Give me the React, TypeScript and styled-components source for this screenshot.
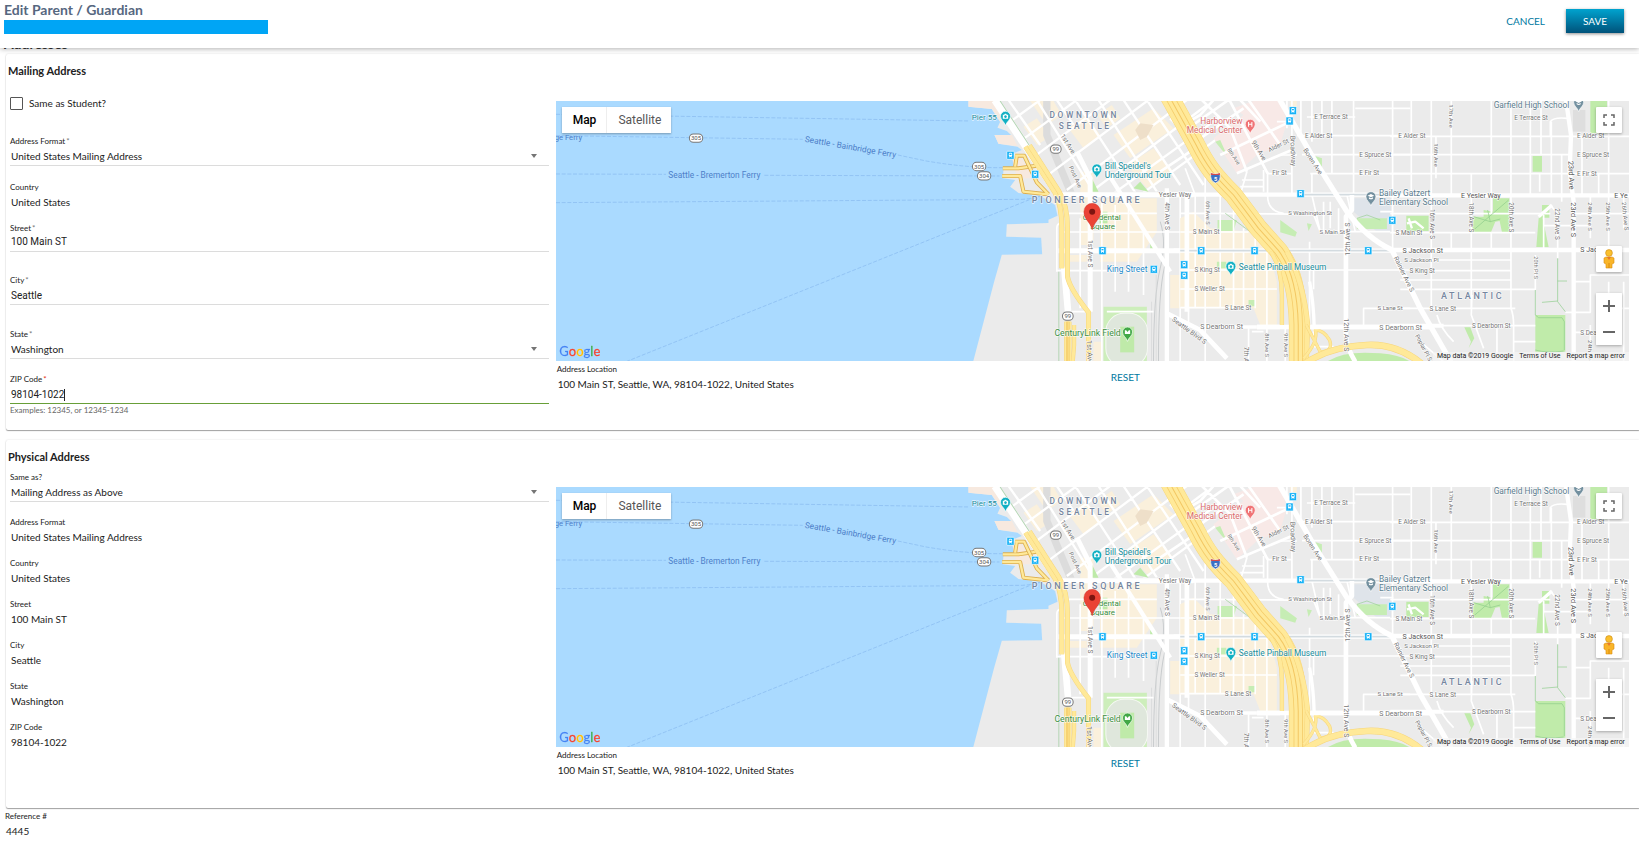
import React, { useId, useState } from 'react';
import styled, { createGlobalStyle } from 'styled-components';

const GlobalStyle = createGlobalStyle`
  * { box-sizing: border-box; }
  body {
    margin: 0;
    background: #fff;
    color: #212121;
    font-family: Lato, "Liberation Sans", sans-serif;
    font-size: 11px;
  }
`;

/* ---------- page shell ---------- */

const Header = styled.header`
  position: sticky;
  top: 0;
  z-index: 5;
  display: flex;
  justify-content: space-between;
  height: 48px;
  padding: 0 15px 0 4px;
  background: #fff;
  box-shadow: 0 1px 5px rgba(0, 0, 0, 0.3);
`;

const Title = styled.h1`
  margin: 0;
  font-size: 14px;
  line-height: 20px;
  font-weight: 700;
  color: #56677f;
`;

const NameBar = styled.div`
  width: 264px;
  height: 14px;
  background: #00a5f5;
`;

const Actions = styled.div`
  display: flex;
  gap: 10px;
  padding-top: 9px;
`;

const TextButton = styled.button`
  height: 24px;
  padding: 0 11px;
  border: 0;
  background: none;
  font: 400 10px/24px Lato, "Liberation Sans", sans-serif;
  color: #0079a1;
  cursor: pointer;
`;

const SaveButton = styled(TextButton)`
  width: 58px;
  color: #fff;
  background: linear-gradient(#00a3cf, #00527a);
  box-shadow: 0 1px 3px rgba(0, 0, 0, 0.45);
`;

const SectionTitle = styled.h2`
  margin: -14px 0 0 4px;
  font-size: 14px;
  line-height: 20px;
  font-weight: 700;
  color: #333;
`;

const Card = styled.section`
  margin: 0 0 10px 6px;
  padding: 9px 10px 0 4px;
  border-radius: 2px 0 0 2px;
  box-shadow: 0 1px 1px rgba(0, 0, 0, 0.35), 0 0 2px rgba(0, 0, 0, 0.14);
`;

const CardTitle = styled.h3`
  margin: 0 0 0 -2px;
  font-size: 11px;
  line-height: 16px;
  font-weight: 700;
`;

const Columns = styled.div`
  display: grid;
  grid-template-columns: 1fr 2fr;
`;

const FieldsColumn = styled.div<{ $top?: number; $bottom: number }>`
  padding: ${(p) => p.$top ?? 0}px 1px ${(p) => p.$bottom}px 0;
`;

const MapColumn = styled.div`
  padding: 22px 0 0 6px;
`;

const MapFooter = styled.div`
  display: grid;
  grid-template-columns: 1fr 1fr;
  padding: 2px 0 0 1px;
`;

const ResetCell = styled.div`
  padding: 2px 0 0 7px;
`;

/* ---------- fields ---------- */

const FieldBox = styled.div<{ $gap: number }>`
  margin-bottom: ${(p) => p.$gap}px;
`;

const Label = styled.label`
  display: block;
  font-size: 8px;
  line-height: 12px;
`;

const Star = styled.span<{ $alert?: boolean }>`
  margin-left: 1px;
  color: ${(p) => (p.$alert ? '#e53012' : '#777')};
`;

const Control = styled.div<{ $tight?: boolean; $line: string }>`
  position: relative;
  display: flex;
  align-items: center;
  box-sizing: content-box;
  height: 15px;
  padding: ${(p) => (p.$tight ? '0 0 2px 1px' : '2px 0 1px 1px')};
  border-bottom: 1px solid ${(p) => p.$line};
`;

const Output = styled.output`
  display: block;
  padding: 2px 0 0 1px;
  font-size: 10px;
  line-height: 15px;
`;

const Select = styled.select`
  appearance: none;
  width: 100%;
  height: 15px;
  padding: 0;
  border: 0;
  background: none;
  color: inherit;
  font: 400 10px/15px Lato, "Liberation Sans", sans-serif;
`;

const Arrow = styled.svg`
  position: absolute;
  right: 12px;
  top: 7px;
  pointer-events: none;
`;

const Input = styled.input<{ $fit?: boolean }>`
  width: 100%;
  height: 15px;
  padding: 0;
  border: 0;
  outline: 0;
  background: none;
  color: inherit;
  font: 400 10px/15px Roboto, "Liberation Sans", sans-serif;
  ${(p) => p.$fit && 'width: auto; field-sizing: content;'}
`;

const Caret = styled.span`
  width: 1px;
  height: 12px;
  background: #222;
`;

const Hint = styled.div`
  font-size: 8px;
  line-height: 12px;
  color: #666;
`;

const CheckRow = styled.label`
  display: flex;
  align-items: center;
  gap: 6px;
  margin: 17px 0 24px;
  font-size: 10px;
  line-height: 15px;
`;

const CheckBox = styled.input`
  appearance: none;
  width: 13px;
  height: 13px;
  margin: 0;
  border: 1px solid #555;
  border-radius: 1px;
  &:checked { background: #0079a1; }
`;

const Reference = styled.div`
  padding: 0 0 10px 5px;
  margin-top: -8px;
`;

function ReadOnly({ label, value, gap = 12 }: { label: string; value: string; gap?: number }) {
  const id = useId();
  return (
    <FieldBox $gap={gap}>
      <Label htmlFor={id}>{label}</Label>
      <Output id={id}>{value}</Output>
    </FieldBox>
  );
}

function SelectField({ label, value, required, gap }: { label: string; value: string; required?: boolean; gap: number }) {
  const id = useId();
  return (
    <FieldBox $gap={gap}>
      <Label htmlFor={id}>{label}{required && <Star>*</Star>}</Label>
      <Control $line="#dcdcdc">
        <Select id={id} defaultValue={value}><option>{value}</option></Select>
        <Arrow width="6" height="4" viewBox="0 0 6 4"><path d="M0 0h6L3 4z" fill="#757575" /></Arrow>
      </Control>
    </FieldBox>
  );
}

function TextField({ label, initial, tight, active, gap }: { label: string; initial: string; tight?: boolean; active?: boolean; gap: number }) {
  const id = useId();
  const [value, setValue] = useState(initial);
  return (
    <FieldBox $gap={gap}>
      <Label htmlFor={id}>{label}<Star $alert={active}>*</Star></Label>
      <Control $tight={tight} $line={active ? '#689f38' : '#dcdcdc'}>
        <Input id={id} $fit={active} value={value} onChange={(e) => setValue(e.target.value)} />
        {active && <Caret />}
      </Control>
    </FieldBox>
  );
}

/* ---------- map ---------- */

const MapFrame = styled.div`
  position: relative;
  height: 260px;
  overflow: hidden;
  background: #aadaff;
  font-family: Roboto, "Liberation Sans", sans-serif;
`;

const MapDrawing = styled.svg`
  display: block;
  width: 100%;
  height: 100%;
`;

const TypeSwitch = styled.div`
  position: absolute;
  left: 6px;
  top: 6px;
  display: flex;
  box-shadow: 0 1px 2px rgba(0, 0, 0, 0.3);
`;

const TypeButton = styled.button<{ $on?: boolean }>`
  height: 26px;
  padding: 0 10px 0 11px;
  border: 0;
  border-right: ${(p) => (p.$on ? '1px solid #eee' : '0')};
  background: #fff;
  color: ${(p) => (p.$on ? '#000' : '#565656')};
  font: ${(p) => (p.$on ? 500 : 400)} 12px/26px Roboto, "Liberation Sans", sans-serif;
`;

const SideControls = styled.div`
  position: absolute;
  right: 7px;
  top: 6px;
  bottom: 16px;
  width: 26px;
  display: flex;
  flex-direction: column;
`;

const MapButton = styled.button`
  display: grid;
  place-items: center;
  width: 26px;
  height: 26px;
  padding: 0;
  border: 0;
  border-radius: 1px;
  background: #fff;
  box-shadow: 0 1px 3px rgba(0, 0, 0, 0.3);
`;

const PegmanButton = styled(MapButton)`
  margin: auto 0 21px;
`;

const ZoomGroup = styled.div`
  background: #fff;
  border-radius: 1px;
  box-shadow: 0 1px 3px rgba(0, 0, 0, 0.3);
  & > button { box-shadow: none; }
`;

const Credits = styled.div`
  position: absolute;
  right: 0;
  bottom: 0;
  display: flex;
  gap: 6px;
  padding: 0 4px;
  background: rgba(245, 245, 245, 0.7);
  font-size: 7px;
  line-height: 9px;
  color: #222;
  & > a { color: inherit; text-decoration: none; }
`;

const Street = styled.path<{ $w?: number; $c?: string }>`
  fill: none;
  stroke: ${(p) => p.$c ?? '#fff'};
  stroke-width: ${(p) => p.$w ?? 5};
  stroke-linejoin: round;
`;

const Name = styled.text<{ $c?: string; $s?: number; $b?: number }>`
  font-family: Roboto, "Liberation Sans", sans-serif;
  font-size: ${(p) => p.$s ?? 20}px;
  font-weight: ${(p) => p.$b ?? 400};
  fill: ${(p) => p.$c ?? '#757575'};
  stroke: #fff;
  stroke-opacity: 0.75;
  stroke-width: 4px;
  stroke-linejoin: round;
  paint-order: stroke;
`;

const SeaName = styled(Name)`
  stroke: none;
`;

const District = styled(Name)`
  letter-spacing: 8px;
`;

const Logo = styled.text`
  font: 400 39px Lato, "Liberation Sans", sans-serif;
  stroke-width: 1px;
  filter: drop-shadow(0 0 2px #fff);
`;

function Freeway({ d, w }: { d: string; w: number }) {
  return (
    <>
      <Street d={d} $w={w} $c="#f7d67c" />
      <Street d={d} $w={w - 3} $c="#ffe999" />
      {w > 20 && <Street d={d} $w={w * 0.5} $c="#f5cd6c" />}
      {w > 20 && <Street d={d} $w={w * 0.5 - 5} $c="#ffe999" />}
      {w > 20 && <Street d={d} $w={3} $c="#f3c763" />}
    </>
  );
}

function Ramp({ d }: { d: string }) {
  return (
    <>
      <Street d={d} $w={12} $c="#dcae4e" />
      <Street d={d} $w={7} $c="#ffe999" />
    </>
  );
}

function Stop({ x, y }: { x: number; y: number }) {
  return (
    <g transform={`translate(${x - 11} ${y - 12})`}>
      <rect width="22" height="24" rx="2" fill="#16b2f7" stroke="#fff" strokeWidth="2" />
      <rect x="6" y="4" width="10" height="12" rx="3" fill="#fff" />
      <rect x="8" y="7" width="6" height="4" fill="#16b2f7" />
      <path d="M7 19l2-3M15 19l-2-3" stroke="#fff" strokeWidth="2" />
    </g>
  );
}

function Shield({ x, y, n }: { x: number; y: number; n: string }) {
  const w = n.length > 2 ? 40 : 32;
  return (
    <g>
      <rect x={x - w / 2} y={y - 13} width={w} height="25" rx="12" fill="#fff" stroke="#777" strokeWidth="3" />
      <text x={x} y={y + 6} textAnchor="middle" fontFamily="Roboto, sans-serif" fontSize="18" fill="#555">{n}</text>
    </g>
  );
}

function Poi({ x, y, color, kind }: { x: number; y: number; color: string; kind: 'camera' | 'hospital' | 'school' | 'field' }) {
  return (
    <g transform={`translate(${x} ${y})`}>
      <path d="M0 28C-3 16-15 12-15 0a15 15 0 0 1 30 0C15 12 3 16 0 28z" fill={color} stroke="#fff" strokeWidth="2" />
      {kind === 'camera' && <path d="M-8-5h4l2-3h4l2 3h4V7H-8zM0-3a4 4 0 1 0 .1 0z" fill="#fff" fillRule="evenodd" />}
      {kind === 'hospital' && <path d="M-5-7v14M5-7v14M-5 0H5" stroke="#fff" strokeWidth="3" fill="none" />}
      {kind === 'school' && <path d="M-10-3L0-8 10-3 0 2zM-6 2v4q6 4 12 0V2L0 5z" fill="#fff" />}
      {kind === 'field' && <path d="M-8-5h4l4 5 4-5h4V6H-8z" fill="#fff" />}
    </g>
  );
}

const minorA =
  'M380 355H650M370 411H720M350 527H620M395 650H440M485 300V600M525 330V590M565 330V590M610 400V600M720 300V800M745 500V700M350 530V470V400Q350 385 362 385M420 370V640M485 540V800M500 650H640';
const downtownGrid =
  'M190 95L300 15M225 150L410 15M262 200L510 15M310 250L625 15M380 285L740 15M440 300L800 30M500 310L840 65M600 300L860 110M205 15L300 150M290 15L460 290M350 15L400 90M405 15L590 300M475 15L650 290M550 15L720 270M620 15L790 270';
const minorB =
  'M0 355H80L400 358L420 410H630M0 411H205M0 525H690M0 582H290M0 638H210M75 230V800M45 300V640M120 300V640M160 300V640M190 400V640M225 430V640M260 465V800M400 583V525M388 440V690M395 15V140M425 15V120M455 15V236M520 15V300M637 15V465M525 40H690M380 66H525M350 122H690M365 179H690M390 236H690M335 15V295M262 230V300Q262 350 310 355M262 236H335M200 230L180 300M185 255H250M180 275H250M250 225V290M395 236V300L420 410M350 180H300M430 320V410M450 320V400M475 340V410M550 690V640H690M15 220L45 300M315 690V800M205 700V800M215 710H250M400 690V755H460M600 350H640M500 300L525 410M320 15V100M362 15V120M290 80H330';
const minorC =
  'M-30 124H687M-30 179H505M-30 236H687M-30 356H450M520 356H687M-30 413H405M90 495H330M90 527H330M0 555H330M0 583H405V480M0 640H345M0 692H405M33 15V300M93 15V650M153 15V301M213 236V640M107 124V250M273 15V356M332 15V640Q340 660 340 692V800M390 15V300M422 15V180M453 80V300M273 413V465M430 360V465M450 330L472 356V490M418 236V290M484 180V320M570 300V430M625 15V465M670 300V400M545 124V301M595 236V301M520 560H570V540H687M520 712H600M495 652H570V560M625 560V640H687M570 690V800M670 560V800M215 600L213 660L250 760M290 700V790M110 660Q120 700 160 740M340 740H405M430 392H570M450 124V80Q460 66 500 70M153 465V413M60 640L40 600M60 740L130 800';

function MapArt() {
  const id = useId().replace(/[^a-zA-Z0-9]/g, '');
  return (
    <MapDrawing viewBox="0 18 3219 780" preserveAspectRatio="xMidYMid slice" role="img" aria-label="Map of downtown Seattle">
      <defs>
        <clipPath id={`${id}d`}><path d="M165 15L350 290H720L860 290V15z" /></clipPath>
      </defs>

      {/* ferry lines */}
      <g fill="none" stroke="#86b8ee" strokeWidth="2" strokeDasharray="12 5">
        <path d="M0 58L1240 78M0 122L740 133M1025 180L1110 198Q1240 220 1345 218M0 237L330 238M625 241L1330 243M0 323L1400 313Q1440 310 1460 300M210 800L1180 410L1430 310" />
      </g>

      {/* waterfront and downtown */}
      <g transform="translate(1152 0)">
        <path d="M85 0V35L155 42L180 80L172 98L200 108L215 122L163 120L175 146L232 155L245 165L220 175V215L190 222L188 250L225 255L210 275L235 294L300 302L345 330L352 362L325 374V384L200 388L198 425L303 428L306 478L185 479L162 560L99 800H2100V0z" fill="#ebebeb" />
        <path d="M85 18V35L155 42L180 80L200 80L160 18zM163 120H215L232 153L175 146zM215 185H240L285 250L230 250z" fill="#f7e9df" />
        <path d="M270 18L320 90L365 60L340 18zM250 95L290 150L330 125L290 70zM385 100L430 160L480 120L440 60zM520 120L570 190L700 100L640 40zM420 230H460V450H420zM480 310H650V410L590 500H480zM690 540H745V640H690zM460 740H485V800H460zM380 480H440V500H380zM560 210L620 280L700 230L640 160zM470 60L500 100L540 70L515 30z" fill="#faf0dc" />
        <g clipPath={`url(#${id}d)`}>
          <Street d="M320 15V120L395 300" $w={22} $c="#dcdcdc" />
          <Street d={downtownGrid} $w={7} />
        </g>
        <path d="M455 250L475 290H455zM580 280L600 260L625 290zM630 440L645 462H630zM478 350H502V385H478z" fill="#bdeaa8" />
        <path d="M490 635H620V800H490z" fill="#cdeebb" />
        <rect x="497" y="655" width="125" height="160" rx="55" fill="#dfe7dc" stroke="#f5f8f3" strokeWidth="3" />
        <rect x="540" y="695" width="42" height="77" fill="#bfeaa9" />
        <Street d="M660 380Q680 440 660 520T640 800M672 380Q690 440 672 520T655 800" $w={3} $c="#c9ccce" />
        <Street d="M648 540V800M634 620V800" $w={2} $c="#d4d6d8" />
        <Street d={minorA} />
        <Street d="M165 15L350 292" $w={24} />
        <Street d="M178 15L360 292M356 530V800" $w={3} $c="#b4d5b4" />
        <Street d="M410 170L450 250V650M355 467H720M350 299H760" $w={15} />
        <Street d="M500 230L690 530M680 280V800" $w={13} />
        <Street d="M372 515L385 665" $w={20} />
        <Ramp d="M188 220H235L290 212" />
        <Ramp d="M186 243H240L250 290L322 298M225 182H252L290 262L325 298M230 182L225 215" />
        <Freeway d="M256 155L344 292Q365 330 365 400V520" w={15} />
        <Freeway d="M268 151L356 288Q382 330 382 400V545Q388 580 445 652V800" w={15} />
        <Freeway d="M383 680V800" w={22} />
        <Freeway d="M402 690V750L398 800" w={12} />
        <path d="M585 105L600 85L640 90L620 125L600 135z" fill="#eedfc9" />
      </g>

      {/* First Hill and the interstate */}
      <g transform="translate(1872 0)">
        <path d="M100 130L190 60L160 40L220 18H300L320 80L300 150L230 180L170 235z" fill="#f8e9e7" />
        <path d="M0 370L40 350L90 400L205 410L265 465L290 560V690H240L220 640H0zM330 18H350V50H330z" fill="#faf0dc" />
        <path d="M520 310H632V410H590L520 350z" fill="#dfe4ea" />
        <path d="M105 140L120 135L140 180L125 165zM112 375H170L160 408H112zM300 375L350 412L345 425L300 412zM380 385L395 388L385 408zM110 500H138V520H110zM205 615H225V634H205zM395 180L425 190V225zM530 370H620V402H530z" fill="#c6edb4" />
        <path d="M440 800Q490 765 600 775Q660 780 690 800z" fill="#c0ebaa" />
        <Street d={minorB} />
        <g fill="none" stroke="#fff" strokeWidth="8">
          <path d="M-60 230L60 150M-30 70L30 130L75 230M10 110L180 -10M60 130L190 40M120 180L330 80M170 235L335 165M60 10L150 100L200 230M145 10L262 235M205 15L300 150M0 95L60 60L100 15M180 15L240 80" />
        </g>
        <Street d="M-30 299H640M-20 467H640" $w={13} />
        <Street d="M350 299H640M0 467H635" $w={5} $c="#d3dbe0" />
        <Street d="M290 0L345 95L400 190L500 350Q560 430 635 465L720 640L812 800" $w={16} />
        <Street d="M515 300V345L497 365V720Q500 760 525 800M20 290V650M230 696H760M-40 655L60 705L140 790" $w={14} />
        <Street d="M388 560Q400 620 402 700M60 696H230" $w={10} />
        <Street d="M135 355L210 410M530 370L560 360L600 375" $w={2} $c="#97cf92" />
        <Freeway d="M-35 0L45 145C80 215 105 245 160 300L235 400L295 467C335 520 352 590 354 690V800" w={56} />
        <Freeway d="M272 470Q305 520 305 600V690" w={13} />
        <Freeway d="M320 470Q370 560 382 690L378 800" w={16} />
        <Freeway d="M378 690L420 770Q460 770 448 735Q430 705 405 705Q415 740 370 790" w={10} />
        <Freeway d="M360 815Q440 755 560 750Q660 745 740 820" w={20} />
        <Street d="M230 696H300M390 696H760" $w={14} />
      </g>

      {/* Central District and Atlantic */}
      <g transform="translate(2532 0)">
        <path d="M570 18H620V115H570zM397 183H425V230H397zM278 310H327V412H305L298 378L285 380L272 412H216L220 365H250V345L278 350zM18 362H85V408H18zM425 330H447V368H425zM415 370L425 360L445 456H408zM405 660H495V770H405zM192 697H210L222 730L205 760L212 740z" fill="#c0ebaa" />
        <path d="M518 45H555V110H518z" fill="#dedede" />
        <Street d={minorC} />
        <Street d="M-30 301H687M-30 465H687" $w={13} />
        <Street d="M497 15L512 120L508 230L520 320V800" $w={13} />
        <Street d="M-30 692H130" $w={12} />
        <Street d="M25 370L35 400M20 385L45 380L70 400" $w={7} />
        <Street d="M220 405L325 315M220 365L270 380L262 345M270 380L300 372M472 490V620L495 650M425 622L472 618M472 558H500M405 585V660L415 668H485L492 680V765M405 765Q440 775 490 768" $w={2} $c="#8ccb8a" />
        <Street d="M415 365L455 330" $w={10} />
      </g>

      {/* labels over the water */}
      <SeaName x="-4" y="134" $c="#4d7fc9" $s={23}>ge Ferry</SeaName>
      <SeaName x="337" y="248" $c="#4d7fc9" $s={25}>Seattle - Bremerton Ferry</SeaName>
      <SeaName transform="translate(745 140) rotate(10)" $c="#4d7fc9" $s={25}>Seattle - Bainbridge Ferry</SeaName>
      <Shield x={420} y={130} n="305" />

      <g transform="translate(1152 0)">
        <Shield x={117} y={215} n="305" />
        <Shield x={132} y={243} n="304" />
        <Shield x={347} y={163} n="99" />
        <Shield x={383} y={664} n="99" />
        <Stop x={211} y={181} />
        <Stop x={285} y={238} />
        <Stop x={487} y={467} />
        <Stop x={641} y={523} />
        <Stop x={732} y={509} />
        <Stop x={732} y={541} />
        <Name x="95" y="76" $c="#168c9c" $s={24}>Pier 55</Name>
        <Poi x={196} y={64} color="#12b0c3" kind="camera" />
        <District x="328" y="70" $c="#75869f" $s={25} $b={500}>DOWNTOWN</District>
        <District x="356" y="101" $c="#75869f" $s={25} $b={500}>SEATTLE</District>
        <Poi x={470} y={222} color="#12b0c3" kind="camera" />
        <Name x="494" y="223" $c="#168c9c" $s={25}>Bill Speidel's</Name>
        <Name x="494" y="248" $c="#168c9c" $s={25}>Underground Tour</Name>
        <Name transform="translate(360 122) rotate(58)">1st Ave</Name>
        <Name transform="translate(386 216) rotate(66)" $s={18}>Post Ave</Name>
        <Name x="656" y="306">Yesler Way</Name>
        <Name transform="translate(675 322) rotate(90)">4th Ave S</Name>
        <Name transform="translate(442 435) rotate(90)">1st Ave S</Name>
        <Name transform="translate(440 735) rotate(88)" $s={22}>1st Ave S</Name>
        <Name transform="translate(694 676) rotate(36)">Seattle Blvd S</Name>
        <District x="275" y="323" $c="#75869f" $s={27} $b={500}>PIONEER SQUARE</District>
        <Name x="428" y="376" $c="#3b8e41" $s={24}>Occidental</Name>
        <Name x="450" y="401" $c="#3b8e41" $s={24}>Square</Name>
        <Name x="500" y="532" $c="#1a87c9" $s={25}>King Street</Name>
        <Name x="343" y="724" $c="#3b8e41" $s={26}>CenturyLink Field</Name>
        <Poi x={562} y={711} color="#42a846" kind="field" />
      </g>

      <g transform="translate(1872 0)">
        <Stop x={338} y={47} />
        <Stop x={328} y={78} />
        <Stop x={361} y={296} />
        <Stop x={63} y={467} />
        <Stop x={223} y={467} />
        <Stop x={564} y={467} />
        <Stop x={636} y={376} />
        <Name x="187" y="88" textAnchor="end" $c="#d9696b" $s={25}>Harborview</Name>
        <Name x="187" y="113" textAnchor="end" $c="#d9696b" $s={25}>Medical Center</Name>
        <Poi x={210} y={88} color="#f07375" kind="hospital" />
        <path d="M92 234Q106 240 119 234Q124 258 106 264Q88 258 92 234z" fill="#3b70c4" stroke="#fff" strokeWidth="2" />
        <path d="M92 234Q106 240 119 234V240H92z" fill="#d84b4b" />
        <text x="106" y="257" textAnchor="middle" fontFamily="Roboto, sans-serif" fontSize="17" fontWeight="700" fill="#fff">5</text>
        <Name x="402" y="71" $s={19}>E Terrace St</Name>
        <Name x="374" y="128" $s={19}>E Alder St</Name>
        <Name x="654" y="128" $s={19}>E Alder St</Name>
        <Name x="537" y="185" $s={19}>E Spruce St</Name>
        <Name x="537" y="240" $s={19}>E Fir St</Name>
        <Name x="276" y="239" $s={19}>Fir St</Name>
        <Name x="324" y="361" $s={18}>S Washington St</Name>
        <Name x="418" y="417" $s={18}>S Main St</Name>
        <Name x="38" y="417" $s={19}>S Main St</Name>
        <Name x="43" y="532" $s={19}>S King St</Name>
        <Name x="43" y="588" $s={19}>S Weller St</Name>
        <Name x="134" y="645" $s={19}>S Lane St</Name>
        <Name x="592" y="645" $s={18}>S Lane St</Name>
        <Name x="60" y="703" $s={21}>S Dearborn St</Name>
        <Name x="597" y="704" $s={21}>S Dearborn St</Name>
        <Name transform="translate(213 142) rotate(58)">9th Ave</Name>
        <Name transform="translate(140 164) rotate(56)" $s={17}>8th Ave</Name>
        <Name transform="translate(268 172) rotate(-27)" $s={19}>Alder St</Name>
        <Name transform="translate(330 122) rotate(88)" $s={21}>Broadway</Name>
        <Name transform="translate(368 165) rotate(57)">Boren Ave</Name>
        <Name transform="translate(76 318) rotate(90)" $s={17}>6th Ave S</Name>
        <Name transform="translate(510 482) rotate(-90)" $s={21}>12th Ave S</Name>
        <Name transform="translate(490 670) rotate(90)" $s={21}>12th Ave S</Name>
        <Name transform="translate(640 488) rotate(64)">Rainier Ave S</Name>
        <Name transform="translate(255 715) rotate(90)" $s={17}>8th Ave S</Name>
        <Name transform="translate(310 715) rotate(90)" $s={17}>9th Ave S</Name>
        <Name transform="translate(192 755) rotate(90)">7th Ave S</Name>
        <Poi x={152} y={514} color="#12b0c3" kind="camera" />
        <Name x="176" y="526" $c="#168c9c" $s={25}>Seattle Pinball Museum</Name>
        <Poi x={572} y={305} color="#73909f" kind="school" />
        <Name x="596" y="304" $c="#5b7c8e" $s={25}>Bailey Gatzert</Name>
        <Name x="596" y="329" $c="#5b7c8e" $s={25}>Elementary School</Name>
      </g>

      <g transform="translate(2532 0)">
        <Name x="280" y="38" $c="#5b7c8e" $s={25}>Garfield High School</Name>
        <Poi x={535} y={22} color="#73909f" kind="school" />
        <Name x="342" y="74" $s={19}>E Terrace St</Name>
        <Name x="530" y="130" $s={19}>E Alder St</Name>
        <Name x="530" y="185" $s={19}>E Spruce St</Name>
        <Name x="530" y="242" $s={19}>E Fir St</Name>
        <Name x="182" y="308" $s={21} $c="#555">E Yesler Way</Name>
        <Name x="642" y="310" $s={21} $c="#555">E Ye</Name>
        <Name x="7" y="473" $s={21} $c="#555">S Jackson St</Name>
        <Name x="540" y="471" $s={21} $c="#555">S Jackson</Name>
        <Name x="12" y="501" $s={18}>S Jackson Pl</Name>
        <Name x="28" y="533" $s={19}>S King St</Name>
        <Name x="-14" y="419" $s={19}>S Main St</Name>
        <Name x="88" y="647" $s={19}>S Lane St</Name>
        <Name x="215" y="698" $s={19}>S Dearborn St</Name>
        <Name x="540" y="719" $s={19}>S Dearborn</Name>
        <Name transform="translate(146 28) rotate(90)" $s={18}>17th Ave</Name>
        <Name transform="translate(101 145) rotate(90)" $s={18}>16th Ave</Name>
        <Name transform="translate(88 342) rotate(90)" $s={19}>16th Ave S</Name>
        <Name transform="translate(205 322) rotate(90)" $s={19}>18th Ave S</Name>
        <Name transform="translate(325 322) rotate(90)" $s={19}>20th Ave S</Name>
        <Name transform="translate(465 340) rotate(90)" $s={19}>22nd Ave S</Name>
        <Name transform="translate(512 322) rotate(90)" $s={22} $c="#555">23rd Ave S</Name>
        <Name transform="translate(504 198) rotate(88)" $s={22} $c="#555">23rd Ave</Name>
        <Name transform="translate(564 322) rotate(90)" $s={18}>24th Ave S</Name>
        <Name transform="translate(616 322) rotate(90)" $s={18}>25th Ave S</Name>
        <Name transform="translate(664 322) rotate(84)" $s={18}>26th Ave S</Name>
        <Name transform="translate(400 484) rotate(90)" $s={17}>20th Pl S</Name>
        <Name transform="translate(562 735) rotate(90)" $s={18}>24th Ave S</Name>
        <Name transform="translate(44 722) rotate(62)" $s={18}>Poplar Pl S</Name>
        <District x="122" y="612" $c="#75869f" $s={27} $b={500}>ATLANTIC</District>
      </g>

      {/* marker for the address */}
      <g transform="translate(1608 350)">
        <path d="M0 55C-4 32-25 24-25 0a25 25 0 0 1 50 0C25 24 4 32 0 55z" fill="#ea4335" stroke="#c5352a" strokeWidth="1" />
        <circle r="9" fill="#7d1510" />
      </g>

      <Logo x="10" y="783">
        <tspan fill="#4285f4" stroke="#4285f4">G</tspan><tspan fill="#ea4335" stroke="#ea4335">o</tspan><tspan fill="#fbbc05" stroke="#fbbc05">o</tspan><tspan fill="#4285f4" stroke="#4285f4">g</tspan><tspan fill="#34a853" stroke="#34a853">l</tspan><tspan fill="#ea4335" stroke="#ea4335">e</tspan>
      </Logo>
    </MapDrawing>
  );
}

function MapPanel() {
  return (
    <MapFrame>
      <MapArt />
      <TypeSwitch>
        <TypeButton $on>Map</TypeButton>
        <TypeButton>Satellite</TypeButton>
      </TypeSwitch>
      <SideControls>
        <MapButton aria-label="Toggle fullscreen">
          <svg width="12" height="12" viewBox="0 0 12 12" fill="none" stroke="#666" strokeWidth="1.5"><path d="M1 4V1h3M8 1h3v3M11 8v3H8M4 11H1V8" /></svg>
        </MapButton>
        <PegmanButton aria-label="Street View">
          <svg width="12" height="20" viewBox="0 0 12 20">
            <path d="M3 8h6l2 1v5l-2 1v4H3v-4l-2-1V9z" fill="#f9b529" stroke="#d98b0e" strokeWidth="0.6" />
            <circle cx="6" cy="4" r="3.4" fill="#fbc02d" stroke="#c98a17" strokeWidth="0.6" />
            <path d="M4 8l2 3 2-3z" fill="#e8792b" />
            <path d="M6 14v5" stroke="#d98b0e" />
          </svg>
        </PegmanButton>
        <ZoomGroup>
          <MapButton aria-label="Zoom in">
            <svg width="12" height="12" viewBox="0 0 12 12"><path d="M0 6h12M6 0v12" stroke="#666" strokeWidth="2" /></svg>
          </MapButton>
          <MapButton aria-label="Zoom out">
            <svg width="12" height="12" viewBox="0 0 12 12"><path d="M0 6h12" stroke="#666" strokeWidth="2" /></svg>
          </MapButton>
        </ZoomGroup>
      </SideControls>
      <Credits>
        <span>Map data ©2019 Google</span>
        <a href="#terms">Terms of Use</a>
        <a href="#report">Report a map error</a>
      </Credits>
    </MapFrame>
  );
}

function LocationColumn() {
  return (
    <MapColumn>
      <MapPanel />
      <MapFooter>
        <ReadOnly label="Address Location" value="100 Main ST, Seattle, WA, 98104-1022, United States" gap={0} />
        <ResetCell><TextButton>RESET</TextButton></ResetCell>
      </MapFooter>
    </MapColumn>
  );
}

export default function App() {
  return (
    <>
      <GlobalStyle />
      <Header>
        <div>
          <Title>Edit Parent / Guardian</Title>
          <NameBar />
        </div>
        <Actions>
          <TextButton>CANCEL</TextButton>
          <SaveButton>SAVE</SaveButton>
        </Actions>
      </Header>
      <main>
        <SectionTitle>Addresses</SectionTitle>
        <Card>
          <CardTitle>Mailing Address</CardTitle>
          <Columns>
            <FieldsColumn $bottom={14}>
              <CheckRow><CheckBox type="checkbox" />Same as Student?</CheckRow>
              <SelectField label="Address Format" value="United States Mailing Address" required gap={15} />
              <ReadOnly label="Country" value="United States" />
              <TextField label="Street" initial="100 Main ST" tight gap={22} />
              <TextField label="City" initial="Seattle" gap={23} />
              <SelectField label="State" value="Washington" required gap={14} />
              <TextField label="ZIP Code" initial="98104-1022" active gap={0} />
              <Hint>Examples: 12345, or 12345-1234</Hint>
            </FieldsColumn>
            <LocationColumn />
          </Columns>
        </Card>
        <Card>
          <CardTitle>Physical Address</CardTitle>
          <Columns>
            <FieldsColumn $top={6} $bottom={46}>
              <SelectField label="Same as?" value="Mailing Address as Above" gap={14} />
              <ReadOnly label="Address Format" value="United States Mailing Address" />
              <ReadOnly label="Country" value="United States" />
              <ReadOnly label="Street" value="100 Main ST" />
              <ReadOnly label="City" value="Seattle" />
              <ReadOnly label="State" value="Washington" />
              <ReadOnly label="ZIP Code" value="98104-1022" />
            </FieldsColumn>
            <LocationColumn />
          </Columns>
        </Card>
        <Reference><ReadOnly label="Reference #" value="4445" gap={0} /></Reference>
      </main>
    </>
  );
}
